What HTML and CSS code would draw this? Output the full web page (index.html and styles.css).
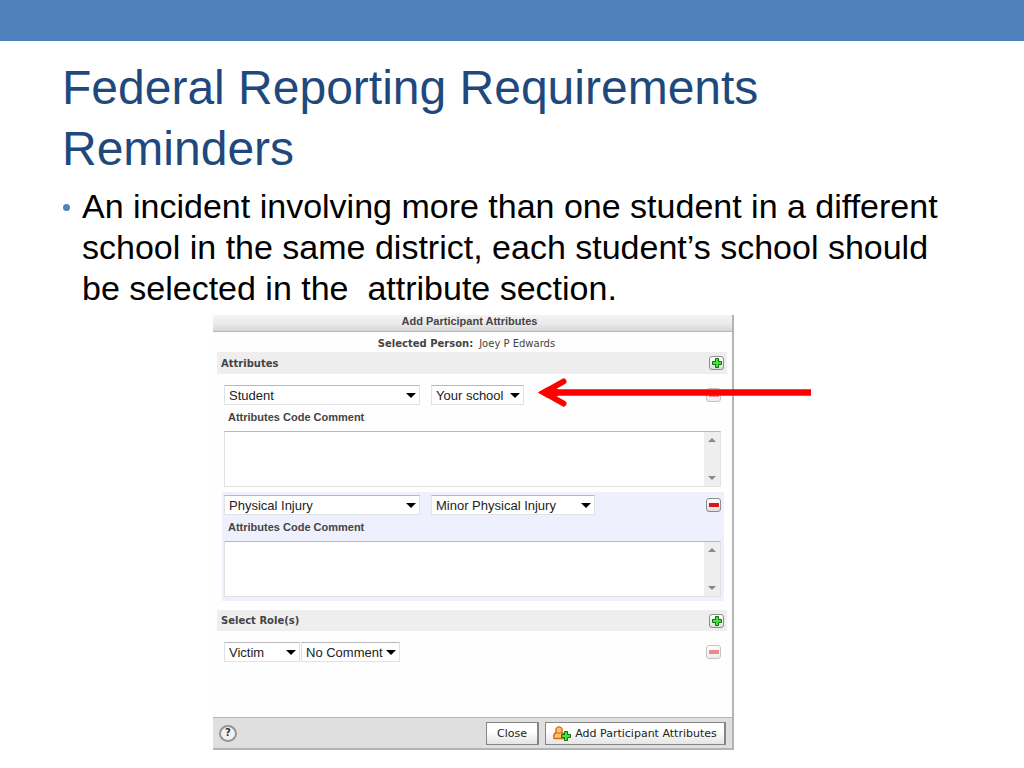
FILE: index.html
```html
<!DOCTYPE html>
<html lang="en">
<head>
<meta charset="utf-8">
<title>Federal Reporting Requirements Reminders</title>
<link rel="stylesheet" href="styles.css">
</head>
<body>
<div class="band"></div>
<main class="slide">
  <h1 class="title">Federal Reporting Requirements<br>Reminders</h1>
  <ul class="points">
    <li>An incident involving more than one student in a different<br>school in the same district, each student’s school should<br>be selected in the&nbsp; attribute section.</li>
  </ul>

  <section class="dialog" aria-labelledby="dialog-title">
    <h2 class="dialog-title" id="dialog-title">Add Participant Attributes</h2>
    <p class="person"><b>Selected Person:</b><span>Joey P Edwards</span></p>

    <div class="bar">
      <h3>Attributes</h3>
      <button class="mini" type="button" aria-label="Add attribute"><svg width="10" height="10" viewBox="0 0 10 10"><path d="M3.5.5h3v3h3v3h-3v3h-3v-3h-3v-3h3z" fill="#4be03c" stroke="#0b7412"/></svg></button>
    </div>

    <div class="group">
      <div class="row">
        <span class="pick wide"><select aria-label="Attribute"><option>Student</option></select></span>
        <span class="pick school"><select aria-label="School"><option>Your school</option></select></span>
        <button class="mini faded" type="button" aria-label="Remove attribute"><svg width="10" height="4" viewBox="0 0 10 4"><path d="M0 0h10v4H0z" fill="#d81818"/></svg></button>
      </div>
      <label class="caption" for="comment-1">Attributes Code Comment</label>
      <div class="memo">
        <textarea id="comment-1"></textarea>
        <span class="track"><i class="up"></i><i class="down"></i></span>
      </div>
      <svg class="pointer" width="273" height="30" viewBox="0 0 273 30" aria-hidden="true">
        <path d="M14 14.500H273" stroke="#f00" stroke-width="6.500" fill="none"/>
        <path d="M25.500 3.500L6 14.500l19.500 11" stroke="#f00" stroke-width="6" stroke-linecap="round" fill="none"/>
        <path d="M0 14.500L10 8.800L20 11v7L10 20.200z" fill="#f00"/>
      </svg>
    </div>

    <div class="group tinted">
      <div class="row">
        <span class="pick wide"><select aria-label="Attribute"><option>Physical Injury</option></select></span>
        <span class="pick injury"><select aria-label="Injury level"><option>Minor Physical Injury</option></select></span>
        <button class="mini" type="button" aria-label="Remove attribute"><svg width="10" height="4" viewBox="0 0 10 4"><path d="M0 0h10v4H0z" fill="#d81818"/></svg></button>
      </div>
      <label class="caption" for="comment-2">Attributes Code Comment</label>
      <div class="memo">
        <textarea id="comment-2"></textarea>
        <span class="track"><i class="up"></i><i class="down"></i></span>
      </div>
    </div>

    <div class="bar roles">
      <h3>Select Role(s)</h3>
      <button class="mini" type="button" aria-label="Add role"><svg width="10" height="10" viewBox="0 0 10 10"><path d="M3.5.5h3v3h3v3h-3v3h-3v-3h-3v-3h3z" fill="#4be03c" stroke="#0b7412"/></svg></button>
    </div>
    <div class="group last">
      <div class="row tight">
        <span class="pick role"><select aria-label="Role"><option>Victim</option></select></span>
        <span class="pick note"><select aria-label="Comment"><option>No Comment</option></select></span>
        <button class="mini faded" type="button" aria-label="Remove role"><svg width="10" height="4" viewBox="0 0 10 4"><path d="M0 0h10v4H0z" fill="#d81818"/></svg></button>
      </div>
    </div>

    <div class="footer">
      <button class="help" type="button" aria-label="Help">?</button>
      <button class="action" type="button">Close</button>
      <button class="action submit" type="button"><svg width="18" height="15" viewBox="0 0 18 15"><path d="M1 12.500c-.8-3.500.5-5.500 2.500-6C1.800 3.500 3.500.8 6 .8s4.200 2.700 2.500 5.700c2 .5 3.300 2.500 2.500 6z" fill="#ffc070" stroke="#d9690c" stroke-width="1.300"/><path d="M4 6.700q2 1.500 4 0" fill="none" stroke="#d9690c"/><path d="M11.500 5.500h3v3h3v3h-3v3h-3v-3h-3v-3h3z" fill="#4be03c" stroke="#0b7412"/></svg>Add Participant Attributes</button>
    </div>
  </section>
</main>
</body>
</html>
```
FILE: styles.css
```css
* { box-sizing: border-box; }
body {
  margin: 0;
  background: #fff;
  color: #000;
  font-family: "Liberation Sans", Arial, sans-serif;
}
h1, h2, h3, p, ul { margin: 0; padding: 0; }
.band { height: 41px; background: #4f81bd; }
.slide { padding: 16px 62px 18px; }
.title {
  color: #1f497d;
  font-size: 48px;
  font-weight: 400;
  line-height: 61px;
}
.points {
  margin-top: 7px;
  list-style: none;
  font-size: 34px;
  line-height: 41px;
  white-space: nowrap;
}
.points li { position: relative; padding-left: 20px; }
.points li::before {
  content: "";
  position: absolute;
  left: 1px;
  top: 18px;
  width: 7px;
  height: 7px;
  border-radius: 50%;
  background: #4f81bd;
}

.dialog {
  max-width: 521px;
  margin: 6px 0 0 151px;
  border-right: 2px solid #b4b4b4;
  background: #fefefe;
  color: #444;
  font-family: "DejaVu Sans", Verdana, sans-serif;
  font-size: 10px;
}
.dialog-title {
  height: 17px;
  padding-right: 6px;
  border-bottom: 1px solid #b8b8b8;
  background: linear-gradient(#f4f4f4, #e9e9e9 60%, #d6d6d6);
  font: bold 11px/13px "Liberation Sans", Arial, sans-serif;
  text-align: center;
}
.person {
  display: flex;
  justify-content: center;
  gap: 6px;
  height: 20px;
  padding-right: 12px;
  line-height: 24px;
}
.bar {
  display: flex;
  align-items: center;
  justify-content: space-between;
  height: 22px;
  margin: 0 5px 0 4px;
  padding: 0 3px 0 4px;
  background: #eee;
}
.bar h3 { font-size: 10px; }
.roles { height: 21px; margin-top: 9px; }
.mini {
  display: grid;
  place-items: center;
  width: 15px;
  height: 14px;
  padding: 0;
  border: 1px solid #8c8c8c;
  border-radius: 3px;
  background: linear-gradient(#fff, #ddd);
}
.row .mini { margin-left: auto; }
.faded { opacity: .5; }
.group {
  position: relative;
  margin: 8px 8px 0 9px;
  padding: 3px 3px 4px 2px;
}
.tinted { margin-top: 1px; background: #eef1fd; }
.last { padding-bottom: 55px; }
.row { display: flex; align-items: center; gap: 11px; height: 20px; }
.tight { gap: 1px; }
.pick { position: relative; height: 20px; }
.pick select {
  width: 100%;
  height: 100%;
  padding: 0 0 0 4px;
  border: 1px solid #e2e2e6;
  border-top-color: #b8b8bc;
  border-radius: 0;
  appearance: none;
  background: #fff;
  color: #222;
  font: 13px "Liberation Sans", Arial, sans-serif;
}
.pick::after {
  content: "";
  position: absolute;
  right: 4px;
  top: 8px;
  border: 5px solid transparent;
  border-top-color: #000;
  border-bottom: 0;
  pointer-events: none;
}
.wide { width: 196px; }
.school { width: 93px; }
.injury { width: 164px; }
.role { width: 76px; }
.note { width: 99px; }
.caption {
  display: block;
  height: 26px;
  padding-left: 4px;
  font: bold 11px/25px "Liberation Sans", Arial, sans-serif;
}
.memo {
  display: flex;
  height: 56px;
  border: 1px solid #e2e2e6;
  border-top-color: #b8b8bc;
  background: #fff;
}
.memo textarea { flex: 1; border: 0; background: none; resize: none; }
.track {
  display: flex;
  flex-direction: column;
  align-items: center;
  justify-content: space-between;
  width: 16px;
  padding: 6px 0;
  background: #eee;
}
.up, .down { border: 4px solid transparent; }
.up { border-top: 0; border-bottom-color: #888; }
.down { border-bottom: 0; border-top-color: #888; }
.pointer { position: absolute; left: 316px; top: -4px; z-index: 1; }

.footer {
  display: flex;
  align-items: center;
  gap: 6px;
  height: 33px;
  padding: 0 6px;
  border-top: 1px solid #b4b4b4;
  border-bottom: 2px solid #b4b4b4;
  background: #dfdfdf;
}
.help {
  width: 18px;
  height: 17px;
  margin-right: auto;
  padding: 0;
  border: 2px solid #949494;
  border-radius: 50%;
  background: #f2f2f2;
  color: #333;
  font: bold 10px/12px "DejaVu Sans", Verdana, sans-serif;
}
.action {
  display: flex;
  align-items: center;
  justify-content: center;
  gap: 4px;
  width: 53px;
  height: 23px;
  padding: 0;
  border: 1px solid #858585;
  border-right-width: 2px;
  background: linear-gradient(#fff 40%, #e4e4e4);
  color: #222;
  font: 11px "DejaVu Sans", Verdana, sans-serif;
  white-space: nowrap;
}
.submit { width: 181px; }
```
